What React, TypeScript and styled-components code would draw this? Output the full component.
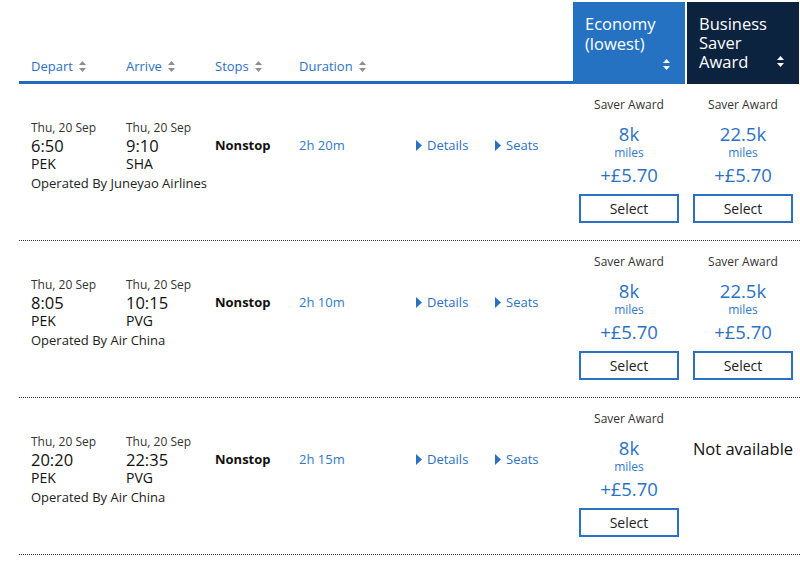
import React from 'react';
import styled, { createGlobalStyle } from 'styled-components';

const Global = createGlobalStyle`
  html, body { margin: 0; padding: 0; background: #fff; }
  body { font-family: "Open Sans", "Liberation Sans", Arial, sans-serif; color: #222; }
`;

const BLUE = '#2b71c3';
const LINK = '#3179cb';

const Page = styled.div`
  width: 800px;
  padding-left: 19px;
  box-sizing: border-box;
`;

const Header = styled.div`
  display: flex;
  height: 84px;
`;

const HeaderLeft = styled.div`
  width: 554px;
  box-sizing: border-box;
  display: flex;
  align-items: flex-end;
  padding: 0 0 5px 12px;
  border-bottom: 3px solid #2069c0;
`;

const HeadCell = styled.div<{ $w?: number }>`
  width: ${(p) => (p.$w ? `${p.$w}px` : 'auto')};
  display: flex;
  align-items: center;
  gap: 6px;
  font-size: 13px;
  line-height: 20px;
  color: ${BLUE};
`;

const FareHead = styled.div<{ $dark?: boolean }>`
  position: relative;
  width: 112px;
  height: 82px;
  margin-top: 2px;
  margin-left: ${(p) => (p.$dark ? '2px' : '0')};
  box-sizing: border-box;
  padding: 12px;
  background: ${(p) => (p.$dark ? '#0c2340' : '#2572c3')};
  color: #fff;
  font-size: 16.5px;
  line-height: ${(p) => (p.$dark ? '19px' : '20px')};
`;

const CornerSort = styled.span<{ $bottom: number }>`
  position: absolute;
  right: 15px;
  bottom: ${(p) => p.$bottom}px;
  display: flex;
`;

const Row = styled.div`
  display: flex;
  height: 156px;
  border-bottom: 1px dotted #333;
`;

const FlightInfo = styled.div`
  width: 196px;
  box-sizing: border-box;
  padding: 36px 0 0 12px;
`;

const Legs = styled.div`
  display: flex;
`;

const Leg = styled.div<{ $w: number }>`
  width: ${(p) => p.$w}px;
`;

const DateText = styled.div`
  font-size: 12px;
  line-height: 16px;
  color: #333;
`;

const TimeText = styled.div`
  font-size: 16.5px;
  line-height: 19px;
  color: #111;
`;

const Code = styled.div`
  font-size: 14px;
  line-height: 18px;
  color: #111;
`;

const Operator = styled.div`
  font-size: 13px;
  line-height: 20px;
  color: #222;
  white-space: nowrap;
`;

const Cell = styled.div<{ $w: number }>`
  width: ${(p) => p.$w}px;
  padding-top: 52px;
  font-size: 13px;
  line-height: 18px;
`;

const Stops = styled(Cell)`
  font-weight: 700;
  color: #111;
`;

const Duration = styled(Cell)`
  color: ${LINK};
`;

const LinkText = styled.span`
  display: inline-flex;
  align-items: center;
  gap: 5px;
  color: ${BLUE};
  font-size: 13px;
`;

const Fare = styled.div<{ $gap?: boolean }>`
  width: 112px;
  margin-left: ${(p) => (p.$gap ? '2px' : '0')};
  box-sizing: border-box;
  display: flex;
  flex-direction: column;
  align-items: center;
  padding-top: 13px;
`;

const FareType = styled.div`
  font-size: 12px;
  line-height: 16px;
  color: #333;
`;

const Miles = styled.div`
  margin-top: 10px;
  font-size: 18.5px;
  line-height: 22px;
  color: ${BLUE};
`;

const MilesUnit = styled.div`
  font-size: 12px;
  line-height: 14px;
  color: ${LINK};
  margin-top: 1px;
`;

const Price = styled.div`
  margin-top: 3px;
  font-size: 18.5px;
  line-height: 24px;
  color: ${BLUE};
`;

const SelectButton = styled.button`
  margin-top: 7px;
  width: 100px;
  height: 29px;
  box-sizing: border-box;
  border: 2px solid ${BLUE};
  background: #fff;
  font-family: inherit;
  font-size: 14px;
  line-height: 25px;
  color: #222;
  padding: 0;
  cursor: pointer;
`;

const Unavailable = styled.div`
  width: 112px;
  margin-left: 2px;
  padding-top: 40px;
  text-align: center;
  font-size: 16.5px;
  line-height: 22px;
  color: #111;
`;

const SortIcon = ({ color = '#8f8f8f' }: { color?: string }) => (
  <svg width="7" height="11" viewBox="0 0 7 11">
    <path d="M3.5 0 L7 4 L0 4 Z" fill={color} />
    <path d="M0 7 L7 7 L3.5 11 Z" fill={color} />
  </svg>
);

const Caret = () => (
  <svg width="6" height="11" viewBox="0 0 6 11">
    <path d="M0 0 L6 5.5 L0 11 Z" fill={BLUE} />
  </svg>
);

type FareT = { miles: string; price: string } | null;

type Flight = {
  dep: string;
  arr: string;
  from: string;
  to: string;
  op: string;
  dur: string;
  eco: FareT;
  bus: FareT;
};

const flights: Flight[] = [
  { dep: '6:50', arr: '9:10', from: 'PEK', to: 'SHA', op: 'Operated By Juneyao Airlines', dur: '2h 20m', eco: { miles: '8k', price: '+£5.70' }, bus: { miles: '22.5k', price: '+£5.70' } },
  { dep: '8:05', arr: '10:15', from: 'PEK', to: 'PVG', op: 'Operated By Air China', dur: '2h 10m', eco: { miles: '8k', price: '+£5.70' }, bus: { miles: '22.5k', price: '+£5.70' } },
  { dep: '20:20', arr: '22:35', from: 'PEK', to: 'PVG', op: 'Operated By Air China', dur: '2h 15m', eco: { miles: '8k', price: '+£5.70' }, bus: null },
];

const FareCell = ({ fare, gap }: { fare: FareT; gap?: boolean }) =>
  fare ? (
    <Fare $gap={gap}>
      <FareType>Saver Award</FareType>
      <Miles>{fare.miles}</Miles>
      <MilesUnit>miles</MilesUnit>
      <Price>{fare.price}</Price>
      <SelectButton>Select</SelectButton>
    </Fare>
  ) : (
    <Unavailable>Not available</Unavailable>
  );

export default function App() {
  return (
    <>
      <Global />
      <Page>
        <Header>
          <HeaderLeft>
            <HeadCell $w={95}>Depart <SortIcon /></HeadCell>
            <HeadCell $w={89}>Arrive <SortIcon /></HeadCell>
            <HeadCell $w={84}>Stops <SortIcon /></HeadCell>
            <HeadCell>Duration <SortIcon /></HeadCell>
          </HeaderLeft>
          <FareHead>
            Economy
            <br />
            (lowest)
            <CornerSort $bottom={14}><SortIcon color="#fff" /></CornerSort>
          </FareHead>
          <FareHead $dark>
            Business
            <br />
            Saver
            <br />
            Award
            <CornerSort $bottom={17}><SortIcon color="#fff" /></CornerSort>
          </FareHead>
        </Header>
        {flights.map((f, i) => (
          <Row key={i}>
            <FlightInfo>
              <Legs>
                <Leg $w={95}>
                  <DateText>Thu, 20 Sep</DateText>
                  <TimeText>{f.dep}</TimeText>
                  <Code>{f.from}</Code>
                </Leg>
                <Leg $w={89}>
                  <DateText>Thu, 20 Sep</DateText>
                  <TimeText>{f.arr}</TimeText>
                  <Code>{f.to}</Code>
                </Leg>
              </Legs>
              <Operator>{f.op}</Operator>
            </FlightInfo>
            <Stops $w={84}>Nonstop</Stops>
            <Duration $w={117}>{f.dur}</Duration>
            <Cell $w={79}><LinkText><Caret />Details</LinkText></Cell>
            <Cell $w={78}><LinkText><Caret />Seats</LinkText></Cell>
            <FareCell fare={f.eco} />
            <FareCell fare={f.bus} gap />
          </Row>
        ))}
      </Page>
    </>
  );
}
